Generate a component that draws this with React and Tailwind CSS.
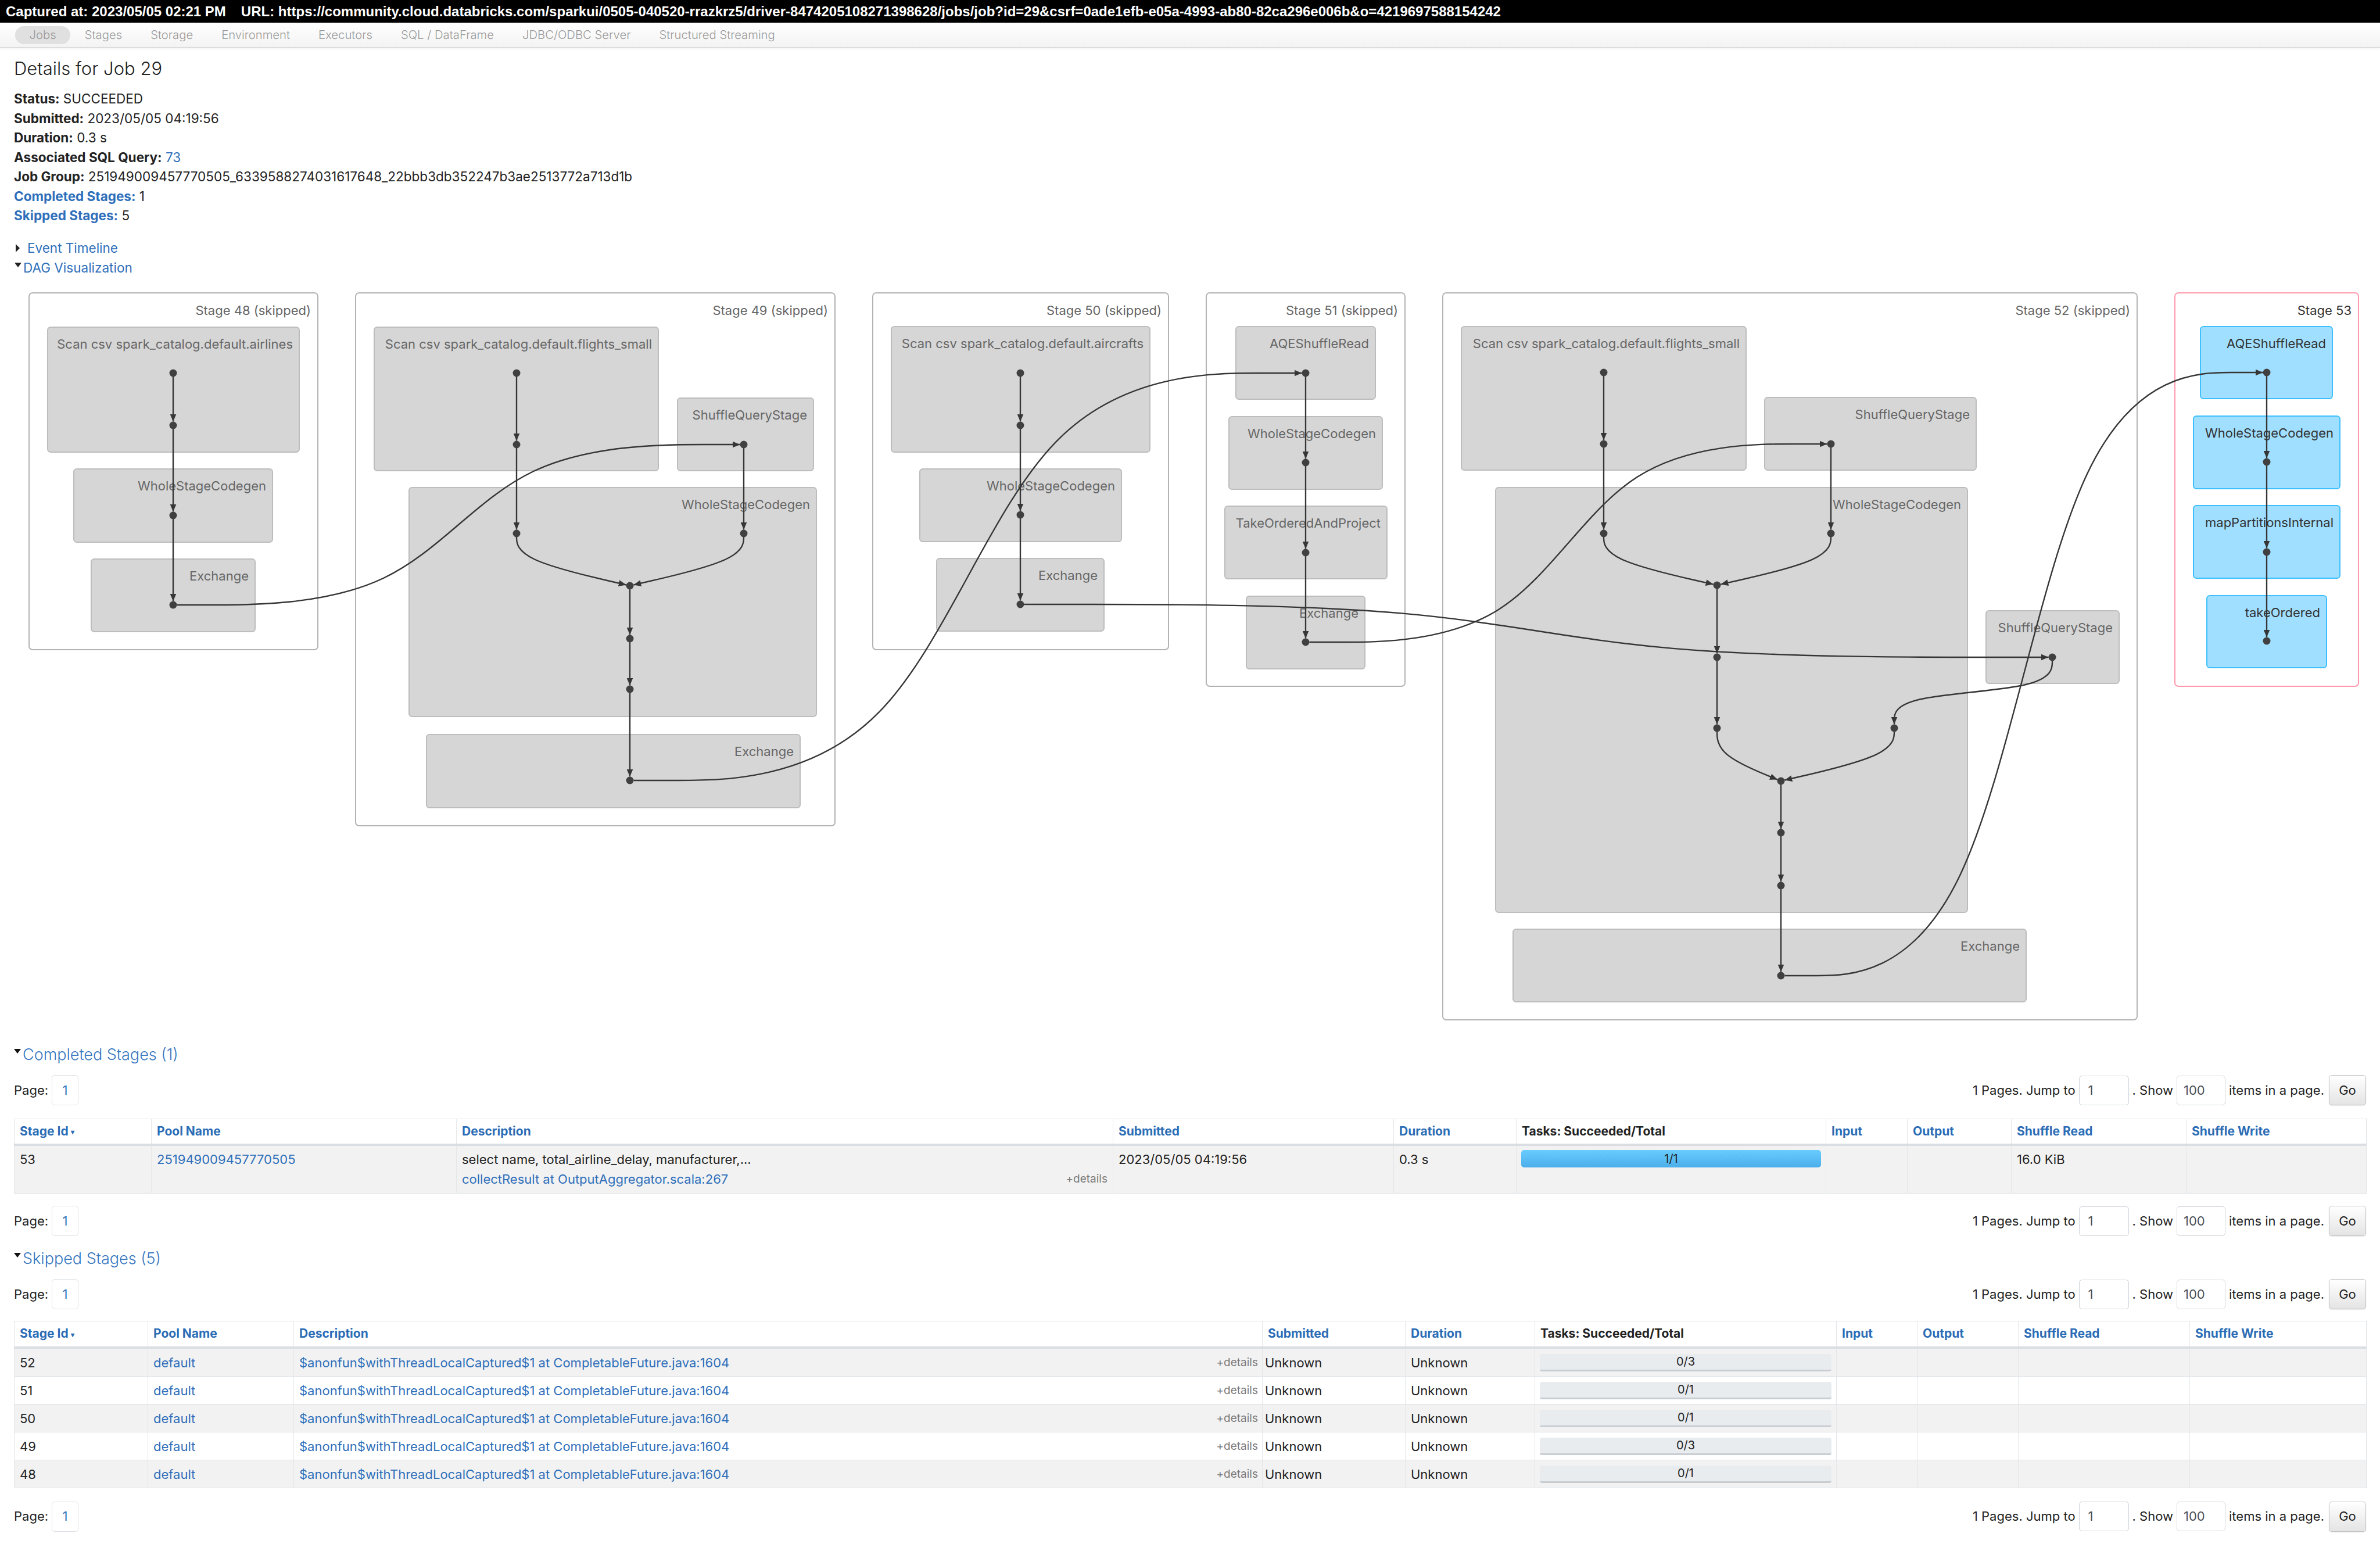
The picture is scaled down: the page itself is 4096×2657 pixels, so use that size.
import React from 'react';

// DAG geometry, in page pixels (svg viewBox is offset so these read as page coords)
const R = 6.5;

const STAGES = [
  { x: 50, y: 504, w: 497, h: 614, title: 'Stage 48 (skipped)', skipped: true },
  { x: 612, y: 504, w: 825, h: 917, title: 'Stage 49 (skipped)', skipped: true },
  { x: 1502, y: 504, w: 509, h: 614, title: 'Stage 50 (skipped)', skipped: true },
  { x: 2076, y: 504, w: 342, h: 677, title: 'Stage 51 (skipped)', skipped: true },
  { x: 2483, y: 504, w: 1195, h: 1251, title: 'Stage 52 (skipped)', skipped: true },
  { x: 3743, y: 504, w: 316, h: 677, title: 'Stage 53', skipped: false },
];

const CLUSTERS = [
  { x: 82, y: 563, w: 433, h: 215, label: 'Scan csv spark_catalog.default.airlines' },
  { x: 127, y: 807, w: 342, h: 126, label: 'WholeStageCodegen' },
  { x: 157, y: 962, w: 282, h: 125, label: 'Exchange' },

  { x: 644, y: 563, w: 489, h: 247, label: 'Scan csv spark_catalog.default.flights_small' },
  { x: 1166, y: 685, w: 234, h: 125, label: 'ShuffleQueryStage' },
  { x: 704, y: 839, w: 701, h: 394, label: 'WholeStageCodegen' },
  { x: 734, y: 1264, w: 643, h: 126, label: 'Exchange' },

  { x: 1534, y: 562, w: 445, h: 216, label: 'Scan csv spark_catalog.default.aircrafts' },
  { x: 1583, y: 807, w: 347, h: 125, label: 'WholeStageCodegen' },
  { x: 1612, y: 961, w: 288, h: 125, label: 'Exchange' },

  { x: 2127, y: 562, w: 240, h: 125, label: 'AQEShuffleRead' },
  { x: 2115, y: 717, w: 264, h: 125, label: 'WholeStageCodegen' },
  { x: 2108, y: 871, w: 279, h: 125, label: 'TakeOrderedAndProject' },
  { x: 2145, y: 1026, w: 204, h: 125, label: 'Exchange' },

  { x: 2515, y: 562, w: 490, h: 247, label: 'Scan csv spark_catalog.default.flights_small' },
  { x: 3037, y: 684, w: 364, h: 125, label: 'ShuffleQueryStage' },
  { x: 2574, y: 839, w: 812, h: 731, label: 'WholeStageCodegen' },
  { x: 3418, y: 1051, w: 229, h: 125, label: 'ShuffleQueryStage' },
  { x: 2604, y: 1599, w: 883, h: 125, label: 'Exchange' },

  { x: 3787, y: 562, w: 227, h: 124, label: 'AQEShuffleRead', active: true },
  { x: 3775, y: 716, w: 252, h: 125, label: 'WholeStageCodegen', active: true },
  { x: 3775, y: 870, w: 252, h: 125, label: 'mapPartitionsInternal', active: true },
  { x: 3798, y: 1025, w: 206, h: 124, label: 'takeOrdered', active: true },
];

const DOTS = [
  [298, 642], [298, 732], [298, 887], [298, 1041],
  [889, 642], [889, 765], [1280, 765], [889, 918], [1280, 918], [1084, 1008], [1084, 1099], [1084, 1186], [1084, 1343],
  [1756, 642], [1756, 732], [1756, 886], [1756, 1040],
  [2247, 642], [2247, 796], [2247, 951], [2247, 1105],
  [2760, 641], [2760, 764], [3151, 764], [2760, 918], [3151, 918], [2955, 1007], [2955, 1131], [3532, 1131],
  [2955, 1253], [3260, 1253], [3065, 1344], [3065, 1433], [3065, 1524], [3065, 1679],
  [3901, 641], [3901, 795], [3901, 950], [3901, 1103],
];

// straight edges inside a stage: [x, fromY, toY]
const STRAIGHT = [
  [298, 642, 732], [298, 732, 887], [298, 887, 1041],
  [889, 642, 765], [889, 765, 918], [1280, 765, 918], [1084, 1008, 1099], [1084, 1099, 1186], [1084, 1186, 1343],
  [1756, 642, 732], [1756, 732, 886], [1756, 886, 1040],
  [2247, 642, 796], [2247, 796, 951], [2247, 951, 1105],
  [2760, 641, 764], [2760, 764, 918], [3151, 764, 918], [2955, 1007, 1131], [2955, 1131, 1253],
  [3065, 1344, 1433], [3065, 1433, 1524], [3065, 1524, 1679],
  [3901, 641, 795], [3901, 795, 950], [3901, 950, 1103],
];

// bent edges inside a stage (dagre-style control points)
const BENT = [
  [[889, 918], [889, 963], [1084, 1008]],
  [[1280, 918], [1280, 963], [1084, 1008]],
  [[2760, 918], [2760, 963], [2955, 1007]],
  [[3151, 918], [3151, 963], [2955, 1007]],
  [[2955, 1253], [2955, 1299], [3065, 1344]],
  [[3260, 1253], [3260, 1299], [3065, 1344]],
  [[3532, 1131], [3532, 1185], [3260, 1197], [3260, 1253]],
];

// edges between stages
const CROSS = [
  [[298, 1041], [1280, 765]],
  [[1084, 1343], [2247, 642]],
  [[1756, 1040], [3532, 1131]],
  [[2247, 1105], [3151, 764]],
  [[3065, 1679], [3901, 641]],
];

// d3 v3 "basis" interpolation
function basis(input) {
  const p = input.slice();
  const n = p.length;
  const dot = (w, a) => w[0] * a[0] + w[1] * a[1] + w[2] * a[2] + w[3] * a[3];
  const b1 = [0, 2 / 3, 1 / 3, 0];
  const b2 = [0, 1 / 3, 2 / 3, 0];
  const b3 = [0, 1 / 6, 2 / 3, 1 / 6];
  const [x0, y0] = p[0];
  const px = [x0, x0, x0, p[1][0]];
  const py = [y0, y0, y0, p[1][1]];
  let d = `M${x0},${y0}L${dot(b3, px)},${dot(b3, py)}`;
  p.push(p[n - 1]);
  let pi = p[0];
  for (let i = 2; i <= n; i++) {
    pi = p[i];
    px.shift();
    px.push(pi[0]);
    py.shift();
    py.push(pi[1]);
    d += `C${dot(b1, px)},${dot(b1, py)},${dot(b2, px)},${dot(b2, py)},${dot(b3, px)},${dot(b3, py)}`;
  }
  d += `L${pi[0]},${pi[1]}`;
  return d;
}

function clipEnd(pts) {
  const out = pts.slice();
  const [tx, ty] = out[out.length - 1];
  const [sx, sy] = out[out.length - 2];
  const len = Math.hypot(tx - sx, ty - sy);
  out[out.length - 1] = [tx - ((tx - sx) / len) * R, ty - ((ty - sy) / len) * R];
  return out;
}

function crossPath([[fx0, fy], [tx0, ty]]) {
  const fx = fx0 + R;
  const tx = tx0 - R;
  return basis([
    [fx, fy],
    [fx + (tx - fx) * 0.4, fy],
    [fx + (tx - fx) * 0.6, ty],
    [tx, ty],
  ]);
}

function Dag() {
  return (
    <svg width="4096" height="1290" viewBox="0 478 4096 1290" className="block" fontFamily="Inter, 'Noto Sans', sans-serif">
      <defs>
        <marker id="arrow" viewBox="0 0 13 11" refX="13" refY="5.5" markerUnits="userSpaceOnUse" markerWidth="13" markerHeight="11" orient="auto">
          <path d="M0,0L13,5.5L0,11z" fill="#363636" />
        </marker>
      </defs>

      {STAGES.map((s) => (
        <g key={s.title}>
          <rect x={s.x} y={s.y} width={s.w} height={s.h} rx="6" fill="#fff" stroke={s.skipped ? '#b3b3b3' : '#ff99ac'} strokeWidth="2" />
          <text x={s.x + s.w - 12} y={s.y + 30} textAnchor="end" dominantBaseline="central" fontSize="22" fill={s.skipped ? '#666' : '#333'}>
            {s.title}
          </text>
        </g>
      ))}

      {CLUSTERS.map((c) => (
        <g key={`${c.x}-${c.y}`}>
          <rect
            x={c.x}
            y={c.y}
            width={c.w}
            height={c.h}
            rx="5"
            fill={c.active ? '#a0dfff' : '#d6d6d6'}
            stroke={c.active ? '#3ec0ff' : '#bdbdbd'}
            strokeWidth="2"
          />
          <text x={c.x + c.w - 11} y={c.y + 29} textAnchor="end" dominantBaseline="central" fontSize="22" fill={c.active ? '#333' : '#666'}>
            {c.label}
          </text>
        </g>
      ))}

      <g fill="none" stroke="#363636" strokeWidth="2.4">
        {STRAIGHT.map(([x, a, b]) => (
          <path key={`s${x}-${a}`} d={`M${x},${a}L${x},${b - R}`} markerEnd="url(#arrow)" />
        ))}
        {BENT.map((pts, i) => (
          <path key={`b${i}`} d={basis(clipEnd(pts))} markerEnd="url(#arrow)" />
        ))}
        {CROSS.map((e, i) => (
          <path key={`c${i}`} d={crossPath(e)} markerEnd="url(#arrow)" />
        ))}
      </g>

      {DOTS.map(([x, y]) => (
        <circle key={`d${x}-${y}`} cx={x} cy={y} r={R} fill="#404040" />
      ))}
    </svg>
  );
}

function TopBar() {
  return (
    <div className="flex h-[39px] items-center bg-black pl-[10px] font-['Liberation_Sans',Arial,sans-serif] text-[24px] font-bold whitespace-nowrap text-white">
      <span>Captured at: 2023/05/05 02:21 PM</span>
      <span className="ml-[26px]">
        URL: https://community.cloud.databricks.com/sparkui/0505-040520-rrazkrz5/driver-8474205108271398628/jobs/job?id=29&amp;csrf=0ade1efb-e05a-4993-ab80-82ca296e006b&amp;o=4219697588154242
      </span>
    </div>
  );
}

const TABS = ['Jobs', 'Stages', 'Storage', 'Environment', 'Executors', 'SQL / DataFrame', 'JDBC/ODBC Server', 'Structured Streaming'];

function Nav() {
  return (
    <div className="flex h-[43px] items-center border-b border-[#d4d4d4] bg-gradient-to-b from-white to-[#f3f3f3] pl-[26px] shadow-[0_2px_4px_rgba(0,0,0,0.05)]">
      {TABS.map((t, i) => (
        <span
          key={t}
          className={`flex h-[31px] items-center px-[24.5px] text-[20.25px] font-light whitespace-nowrap text-[#9a9a9a] ${
            i === 0 ? 'rounded-full bg-[#e0e0e0]' : ''
          }`}
        >
          {t}
        </span>
      ))}
    </div>
  );
}

function Summary() {
  return (
    <div className="px-[24px] text-[22.5px] text-[#222]">
      <h3 className="pt-[19px] text-[31px] leading-[33px] font-light text-[#222]">Details for Job 29</h3>
      <ul className="mt-[19px] leading-[33.5px]">
        <li>
          <strong>Status:</strong> SUCCEEDED
        </li>
        <li>
          <strong>Submitted:</strong> 2023/05/05 04:19:56
        </li>
        <li>
          <strong>Duration:</strong> 0.3 s
        </li>
        <li>
          <strong>Associated SQL Query:</strong> <span className="text-[#2f6fba]">73</span>
        </li>
        <li>
          <strong>Job Group:</strong> 251949009457770505_6339588274031617648_22bbb3db352247b3ae2513772a713d1b
        </li>
        <li>
          <strong className="text-[#2f6fba]">Completed Stages:</strong> 1
        </li>
        <li>
          <strong className="text-[#2f6fba]">Skipped Stages:</strong> 5
        </li>
      </ul>
      <div className="mt-[22.5px] flex h-[34px] items-center">
        <span className="ml-[3px] inline-block h-0 w-0 border-y-[7px] border-l-[7px] border-y-transparent border-l-[#222]" />
        <span className="ml-[13px] text-[#2f6fba]">Event Timeline</span>
      </div>
      <div className="flex h-[34px] items-center">
        <span className="ml-[1px] -mt-[10px] inline-block h-0 w-0 border-x-[6px] border-t-[8px] border-x-transparent border-t-[#222]" />
        <span className="ml-[3px] text-[#2f6fba]">DAG Visualization</span>
      </div>
    </div>
  );
}

function Pager() {
  return (
    <div className="flex h-[52px] items-center justify-between text-[22px] text-[#222]">
      <div className="flex items-center">
        <span>Page:</span>
        <span className="ml-[6px] flex h-[52px] w-[46px] items-center justify-center rounded-[5px] border border-[#dee2e6] text-[#2f6fba]">1</span>
      </div>
      <div className="flex items-center whitespace-nowrap">
        <span>1 Pages. Jump to</span>
        <span className="ml-[6px] flex h-[51px] w-[86px] items-center rounded-[5px] border border-[#ced4da] pl-[15px] text-[#495057]">1</span>
        <span className="ml-[6px]">. Show</span>
        <span className="ml-[6px] flex h-[51px] w-[84px] items-center rounded-[5px] border border-[#ced4da] pl-[11px] text-[#495057]">100</span>
        <span className="ml-[6px]">items in a page.</span>
        <span className="ml-[8px] flex h-[52px] w-[64px] items-center justify-center rounded-[5px] border border-[#c4c4c4] bg-gradient-to-b from-white to-[#e4e4e4] shadow-[0_1px_2px_rgba(0,0,0,0.1)]">
          Go
        </span>
      </div>
    </div>
  );
}

function SectionToggle({ children }) {
  return (
    <div className="flex h-[40px] items-center">
      <span className="-mt-[12px] inline-block h-0 w-0 border-x-[6px] border-t-[8px] border-x-transparent border-t-[#111]" />
      <span className="ml-[3px] text-[27px] font-light text-[#3777c0]">{children}</span>
    </div>
  );
}

function HeadCell({ children, dark, sort }) {
  return (
    <th className={`border-l border-[#e4e6e9] px-[9px] pt-[8px] pb-[7px] text-left align-top text-[21px] leading-[26px] font-bold whitespace-nowrap ${dark ? 'text-[#222]' : 'text-[#2a6cb5]'}`}>
      {children}
      {sort && <span className="ml-[4px] align-middle text-[12px]">▾</span>}
    </th>
  );
}

const HEADS = ['Stage Id', 'Pool Name', 'Description', 'Submitted', 'Duration', 'Tasks: Succeeded/Total', 'Input', 'Output', 'Shuffle Read', 'Shuffle Write'];

function TableHead() {
  return (
    <thead>
      <tr className="border-b-[4px] border-[#dadde2]">
        {HEADS.map((h, i) => (
          <HeadCell key={h} dark={i === 5} sort={i === 0}>
            {h}
          </HeadCell>
        ))}
      </tr>
    </thead>
  );
}

function CompletedTable() {
  const td = 'border-l border-[#e4e6e9] px-[9px] pt-[6px] pb-[7px] align-top';
  return (
    <table className="w-full table-fixed border border-[#dee2e6] text-[22px] leading-[34px] text-[#222]">
      <colgroup>
        <col className="w-[236px]" />
        <col className="w-[525px]" />
        <col className="w-[1130px]" />
        <col className="w-[483px]" />
        <col className="w-[211px]" />
        <col className="w-[533px]" />
        <col className="w-[140px]" />
        <col className="w-[179px]" />
        <col className="w-[301px]" />
        <col className="w-[310px]" />
      </colgroup>
      <TableHead />
      <tbody>
        <tr className="bg-[#f2f2f2]">
          <td className={td}>53</td>
          <td className={`${td} text-[#2f6fba]`}>251949009457770505</td>
          <td className={td}>
            <div>select name, total_airline_delay, manufacturer,...</div>
            <div className="flex items-center justify-between">
              <span className="text-[#2f6fba]">collectResult at OutputAggregator.scala:267</span>
              <span className="text-[19px] text-[#7a7a7a]">+details</span>
            </div>
          </td>
          <td className={td}>2023/05/05 04:19:56</td>
          <td className={td}>0.3 s</td>
          <td className="border-l border-[#e4e6e9] px-[8px] pt-[7px] align-top">
            <div className="flex h-[30px] items-center justify-center rounded-[5px] bg-gradient-to-b from-[#68ccff] to-[#4caeea] text-[20px] text-[#222]">1/1</div>
          </td>
          <td className={td}></td>
          <td className={td}></td>
          <td className={td}>16.0 KiB</td>
          <td className={td}></td>
        </tr>
      </tbody>
    </table>
  );
}

const SKIPPED = [
  { id: 52, tasks: '0/3' },
  { id: 51, tasks: '0/1' },
  { id: 50, tasks: '0/1' },
  { id: 49, tasks: '0/3' },
  { id: 48, tasks: '0/1' },
];

function SkippedTable() {
  const td = 'border-l border-[#e4e6e9] px-[9px] pt-[11px] pb-[10px] align-top';
  return (
    <table className="w-full table-fixed border border-[#dee2e6] text-[22px] leading-[26px] text-[#222]">
      <colgroup>
        <col className="w-[230px]" />
        <col className="w-[251px]" />
        <col className="w-[1667px]" />
        <col className="w-[246px]" />
        <col className="w-[223px]" />
        <col className="w-[519px]" />
        <col className="w-[139px]" />
        <col className="w-[174px]" />
        <col className="w-[295px]" />
        <col className="w-[304px]" />
      </colgroup>
      <TableHead />
      <tbody>
        {SKIPPED.map((r, i) => (
          <tr key={r.id} className={`border-t border-[#dee2e6] ${i % 2 === 0 ? 'bg-[#f2f2f2]' : 'bg-white'}`}>
            <td className={td}>{r.id}</td>
            <td className={`${td} text-[#2f6fba]`}>default</td>
            <td className="border-l border-[#e4e6e9] pt-[11px] pr-[7px] pb-[10px] pl-[9px] align-top">
              <div className="flex items-center justify-between">
                <span className="text-[#2f6fba]">$anonfun$withThreadLocalCaptured$1 at CompletableFuture.java:1604</span>
                <span className="text-[19px] text-[#7a7a7a]">+details</span>
              </div>
            </td>
            <td className="border-l border-[#e4e6e9] pt-[11px] pb-[10px] pl-[4px] align-top">Unknown</td>
            <td className={td}>Unknown</td>
            <td className="border-l border-[#e4e6e9] px-[8px] pt-[9px] align-top">
              <div className="flex h-[30px] items-center justify-center rounded-[4px] border-b-[3px] border-[#c8cdd2] bg-[#e9ecef] text-[20px] text-[#222]">
                {r.tasks}
              </div>
            </td>
            <td className={td}></td>
            <td className={td}></td>
            <td className={td}></td>
            <td className={td}></td>
          </tr>
        ))}
      </tbody>
    </table>
  );
}

export default function App() {
  return (
    <div className="h-[2657px] w-[4096px] overflow-hidden bg-white font-['Inter','Noto_Sans',sans-serif]">
      <TopBar />
      <Nav />
      <Summary />
      <Dag />
      <div className="px-[24px]">
        <div className="mt-[27px]">
          <SectionToggle>Completed Stages (1)</SectionToggle>
        </div>
        <div className="mt-[15px]">
          <Pager />
        </div>
        <div className="mt-[23px]">
          <CompletedTable />
        </div>
        <div className="mt-[21px]">
          <Pager />
        </div>
        <div className="mt-[19px]">
          <SectionToggle>Skipped Stages (5)</SectionToggle>
        </div>
        <div className="mt-[15px]">
          <Pager />
        </div>
        <div className="mt-[20px]">
          <SkippedTable />
        </div>
        <div className="mt-[23px]">
          <Pager />
        </div>
      </div>
    </div>
  );
}
